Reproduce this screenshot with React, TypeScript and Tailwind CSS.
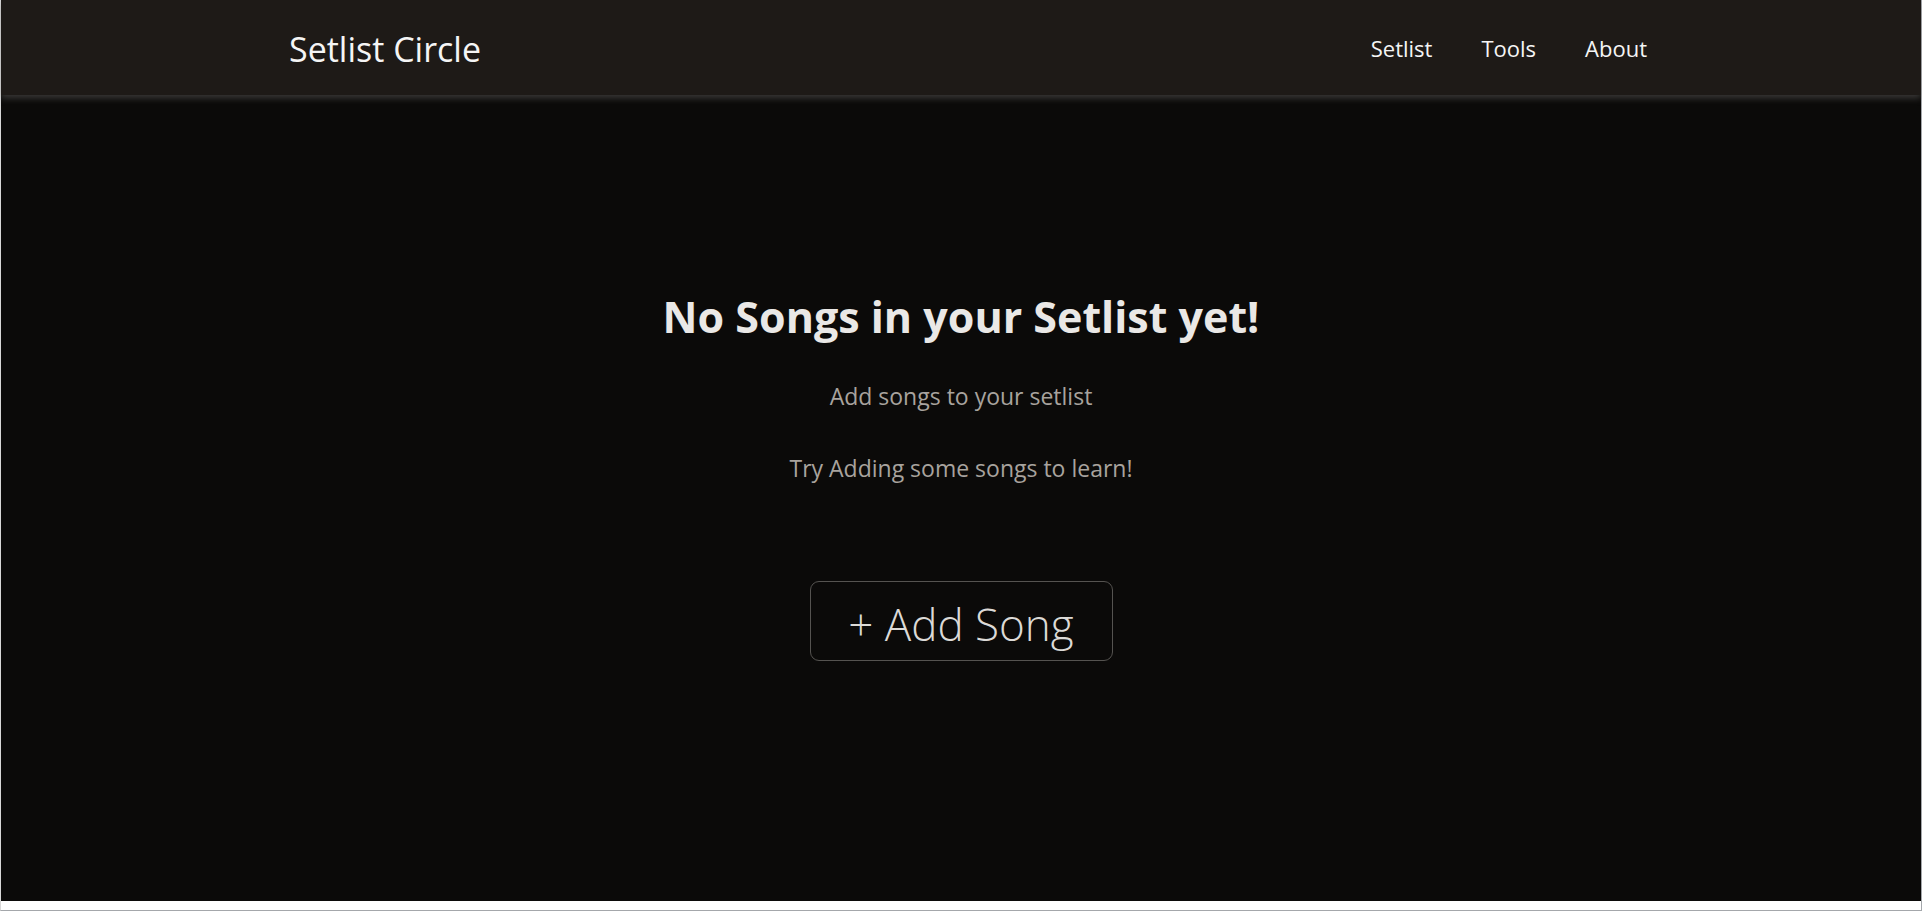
export default function App() {
  return (
    <div className="w-[1922px] h-[911px] bg-white border-l border-l-[#d8d8d8] border-r border-r-[#a4a7ab] border-b border-b-[#a4a7ab] flex flex-col font-['Open_Sans',sans-serif]">
      <div className="h-[901px] bg-[#0b0a09] flex flex-col">
        <header className="h-[95px] bg-[#1e1a17] shadow-[0_3px_7px_rgba(120,118,115,0.45)] flex items-center pl-[288px] pr-[274px] justify-between relative z-10">
          <a className="text-[#f5f5f5] text-[34px] leading-none mt-[2px]">Setlist Circle</a>
          <nav className="flex items-center gap-[49px] text-[#f5f5f5] text-[22px] mt-[2px]">
            <a>Setlist</a>
            <a>Tools</a>
            <a>About</a>
          </nav>
        </header>
        <main className="flex flex-col items-center pt-[190px]">
          <h1 className="text-[#eae8e6] text-[43px] font-bold leading-[64px]">No Songs in your Setlist yet!</h1>
          <p className="text-[#a8a39e] text-[23px] leading-[34px] mt-[30px]">Add songs to your setlist</p>
          <p className="text-[#a8a39e] text-[23px] leading-[34px] mt-[38px]">Try Adding some songs to learn!</p>
          <button className="mt-[96px] w-[303px] h-[80px] border border-[#555350] rounded-[9px] text-[#dcdad7] text-[44px] font-light leading-none pt-[5px]">
            + Add Song
          </button>
        </main>
      </div>
    </div>
  );
}
